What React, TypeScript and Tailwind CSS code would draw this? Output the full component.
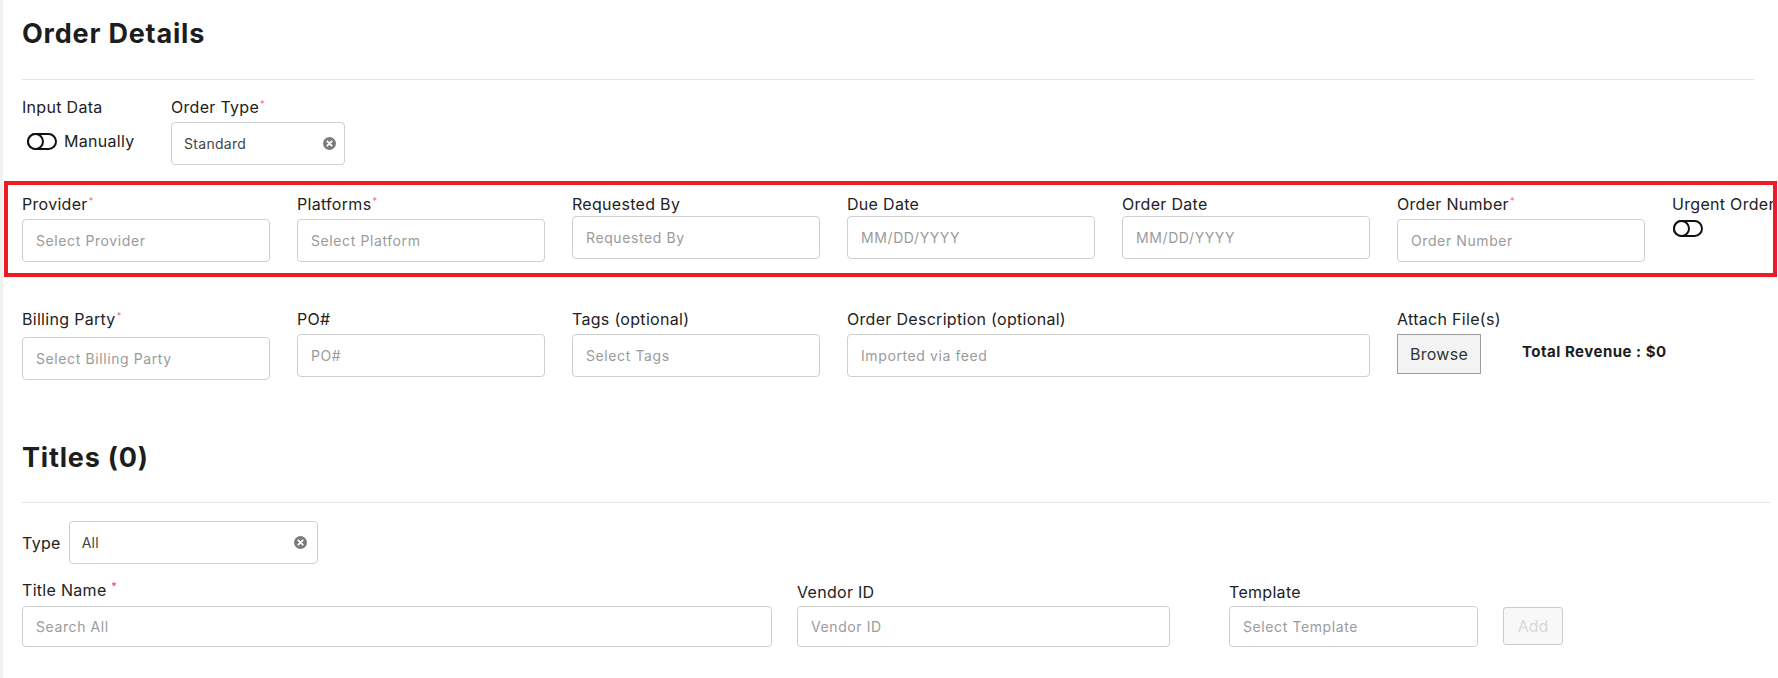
import React from 'react';

const FONT = { fontFamily: 'Inter, "Noto Sans", Arial, sans-serif' };

function Req() {
  return <span className="relative -top-[6px] ml-[1px] text-[9px] text-[#f0607a]">*</span>;
}

function ClearIcon() {
  return (
    <svg width="13" height="13" viewBox="0 0 13 13">
      <circle cx="6.5" cy="6.5" r="6.5" fill="#7b7b7b" />
      <path d="M4.3 4.3 L8.7 8.7 M8.7 4.3 L4.3 8.7" stroke="#fff" strokeWidth="1.8" strokeLinecap="round" />
    </svg>
  );
}

function Toggle() {
  return (
    <svg width="30" height="17" viewBox="0 0 30 17">
      <rect x="1" y="1" width="28" height="15" rx="7.5" fill="none" stroke="#111" strokeWidth="2" />
      <circle cx="8.5" cy="8.5" r="7.5" fill="#fff" stroke="#111" strokeWidth="2" />
    </svg>
  );
}

function Label({ text, req, mb = 'mb-[2px]' }: { text: string; req?: boolean; mb?: string }) {
  return (
    <div className={`text-[16px] leading-[20px] tracking-[0.3px] text-[#222] whitespace-nowrap ${mb}`}>
      {text}
      {req && <Req />}
    </div>
  );
}

function Input({ placeholder, w = 'w-[248px]', h = 'h-[43px]' }: { placeholder: string; w?: string; h?: string }) {
  return (
    <div className={`${w} ${h} flex items-center rounded-[4px] border border-[#cfcfcf] bg-white px-[13px] text-[14px] tracking-[0.6px] text-[#9b9b9b] whitespace-nowrap`}>
      {placeholder}
    </div>
  );
}

function Field({ label, req, placeholder, w, mb }: { label: string; req?: boolean; placeholder: string; w?: string; mb?: string }) {
  return (
    <div className="shrink-0">
      <Label text={label} req={req} mb={mb} />
      <Input placeholder={placeholder} w={w} />
    </div>
  );
}

export default function App() {
  return (
    <div style={FONT} className="min-h-[678px] w-[1778px] overflow-hidden bg-white border-l-[3px] border-[#f1f1f1] text-[#222]">
      {/* Order details */}
      <div className="pl-[19px] pr-[24px]">
        <h1 className="mt-[18px] text-[27px] leading-[32px] font-bold tracking-[0.8px] text-[#1d1d1d]">Order Details</h1>
        <div className="mt-[29px] h-px bg-[#e4e4e4]" />

        <div className="mt-[17px] flex">
          <div className="w-[149px] shrink-0">
            <Label text="Input Data" />
            <div className="mt-[12px] ml-[5px] flex items-center gap-[7px] text-[16px] tracking-[0.3px]">
              <Toggle />
              <span>Manually</span>
            </div>
          </div>
          <div>
            <Label text="Order Type" req />
            <div className="w-[174px] h-[43px] flex items-center justify-between rounded-[4px] border border-[#cfcfcf] pl-[12px] pr-[8px] text-[14px] tracking-[0.3px] text-[#444]">
              <span>Standard</span>
              <ClearIcon />
            </div>
          </div>
        </div>
      </div>

      {/* highlighted row */}
      <div className="mt-[16px] ml-[1px] mr-[1px] border-4 border-[#ed1c24] pt-[9px] pb-[11px] pl-[14px] overflow-hidden">
        <div className="flex gap-[27px]">
          <Field label="Provider" req placeholder="Select Provider" />
          <Field label="Platforms" req placeholder="Select Platform" />
          <Field label="Requested By" placeholder="Requested By" />
          <Field label="Due Date" placeholder="MM/DD/YYYY" />
          <Field label="Order Date" placeholder="MM/DD/YYYY" />
          <Field label="Order Number" req placeholder="Order Number" />
          <div className="shrink-0">
            <Label text="Urgent Order" />
            <div className="mt-[6px] ml-[1px]">
              <Toggle />
            </div>
          </div>
        </div>
      </div>

      <div className="pl-[19px] pr-[24px]">
        <div className="mt-[32px] flex gap-[27px]">
          <Field label="Billing Party" req placeholder="Select Billing Party" mb="mb-[5px]" />
          <Field label="PO#" placeholder="PO#" mb="mb-[5px]" />
          <Field label="Tags (optional)" placeholder="Select Tags" mb="mb-[5px]" />
          <Field label="Order Description (optional)" placeholder="Imported via feed" w="w-[523px]" mb="mb-[5px]" />
          <div className="shrink-0">
            <Label text="Attach File(s)" mb="mb-[5px]" />
            <div className="flex items-center">
              <button className="w-[84px] h-[40px] border border-[#9d9d9d] bg-[#f3f3f3] text-[16px] tracking-[0.3px] text-[#333]">Browse</button>
              <span className="ml-[41px] text-[15px] font-bold tracking-[0.5px] text-[#1d1d1d] -mt-[4px]">Total Revenue : $0</span>
            </div>
          </div>
        </div>
      </div>

      {/* Titles */}
      <div className="pl-[19px] pr-[8px]">
        <h2 className="mt-[62px] text-[27px] leading-[32px] font-bold tracking-[0.8px] text-[#1d1d1d]">Titles (0)</h2>
        <div className="mt-[28px] h-px bg-[#e4e4e4]" />

        <div className="mt-[18px] flex items-center gap-[8px]">
          <span className="text-[16px] tracking-[0.3px]">Type</span>
          <div className="w-[249px] h-[43px] flex items-center justify-between rounded-[4px] border border-[#cfcfcf] pl-[12px] pr-[10px] text-[14px] tracking-[0.3px] text-[#444]">
            <span>All</span>
            <ClearIcon />
          </div>
        </div>

        <div className="mt-[16px] flex items-end">
          <div className="shrink-0">
            <div className="text-[16px] leading-[20px] tracking-[0.3px] mb-[4px]">
              Title Name <span className="relative -top-[6px] text-[11px] text-[#ef3b6a]">*</span>
            </div>
            <Input placeholder="Search All" w="w-[750px]" h="h-[41px]" />
          </div>
          <div className="ml-[25px] shrink-0">
            <Label text="Vendor ID" mb="mb-[4px]" />
            <Input placeholder="Vendor ID" w="w-[373px]" h="h-[41px]" />
          </div>
          <div className="ml-[59px] shrink-0">
            <Label text="Template" mb="mb-[4px]" />
            <Input placeholder="Select Template" w="w-[249px]" h="h-[41px]" />
          </div>
          <button className="ml-[25px] mb-[2px] w-[60px] h-[38px] rounded-[3px] border border-[#cccccc] bg-[#f8f8f8] text-[16px] text-[#d9d9d9]">Add</button>
        </div>
      </div>
    </div>
  );
}
